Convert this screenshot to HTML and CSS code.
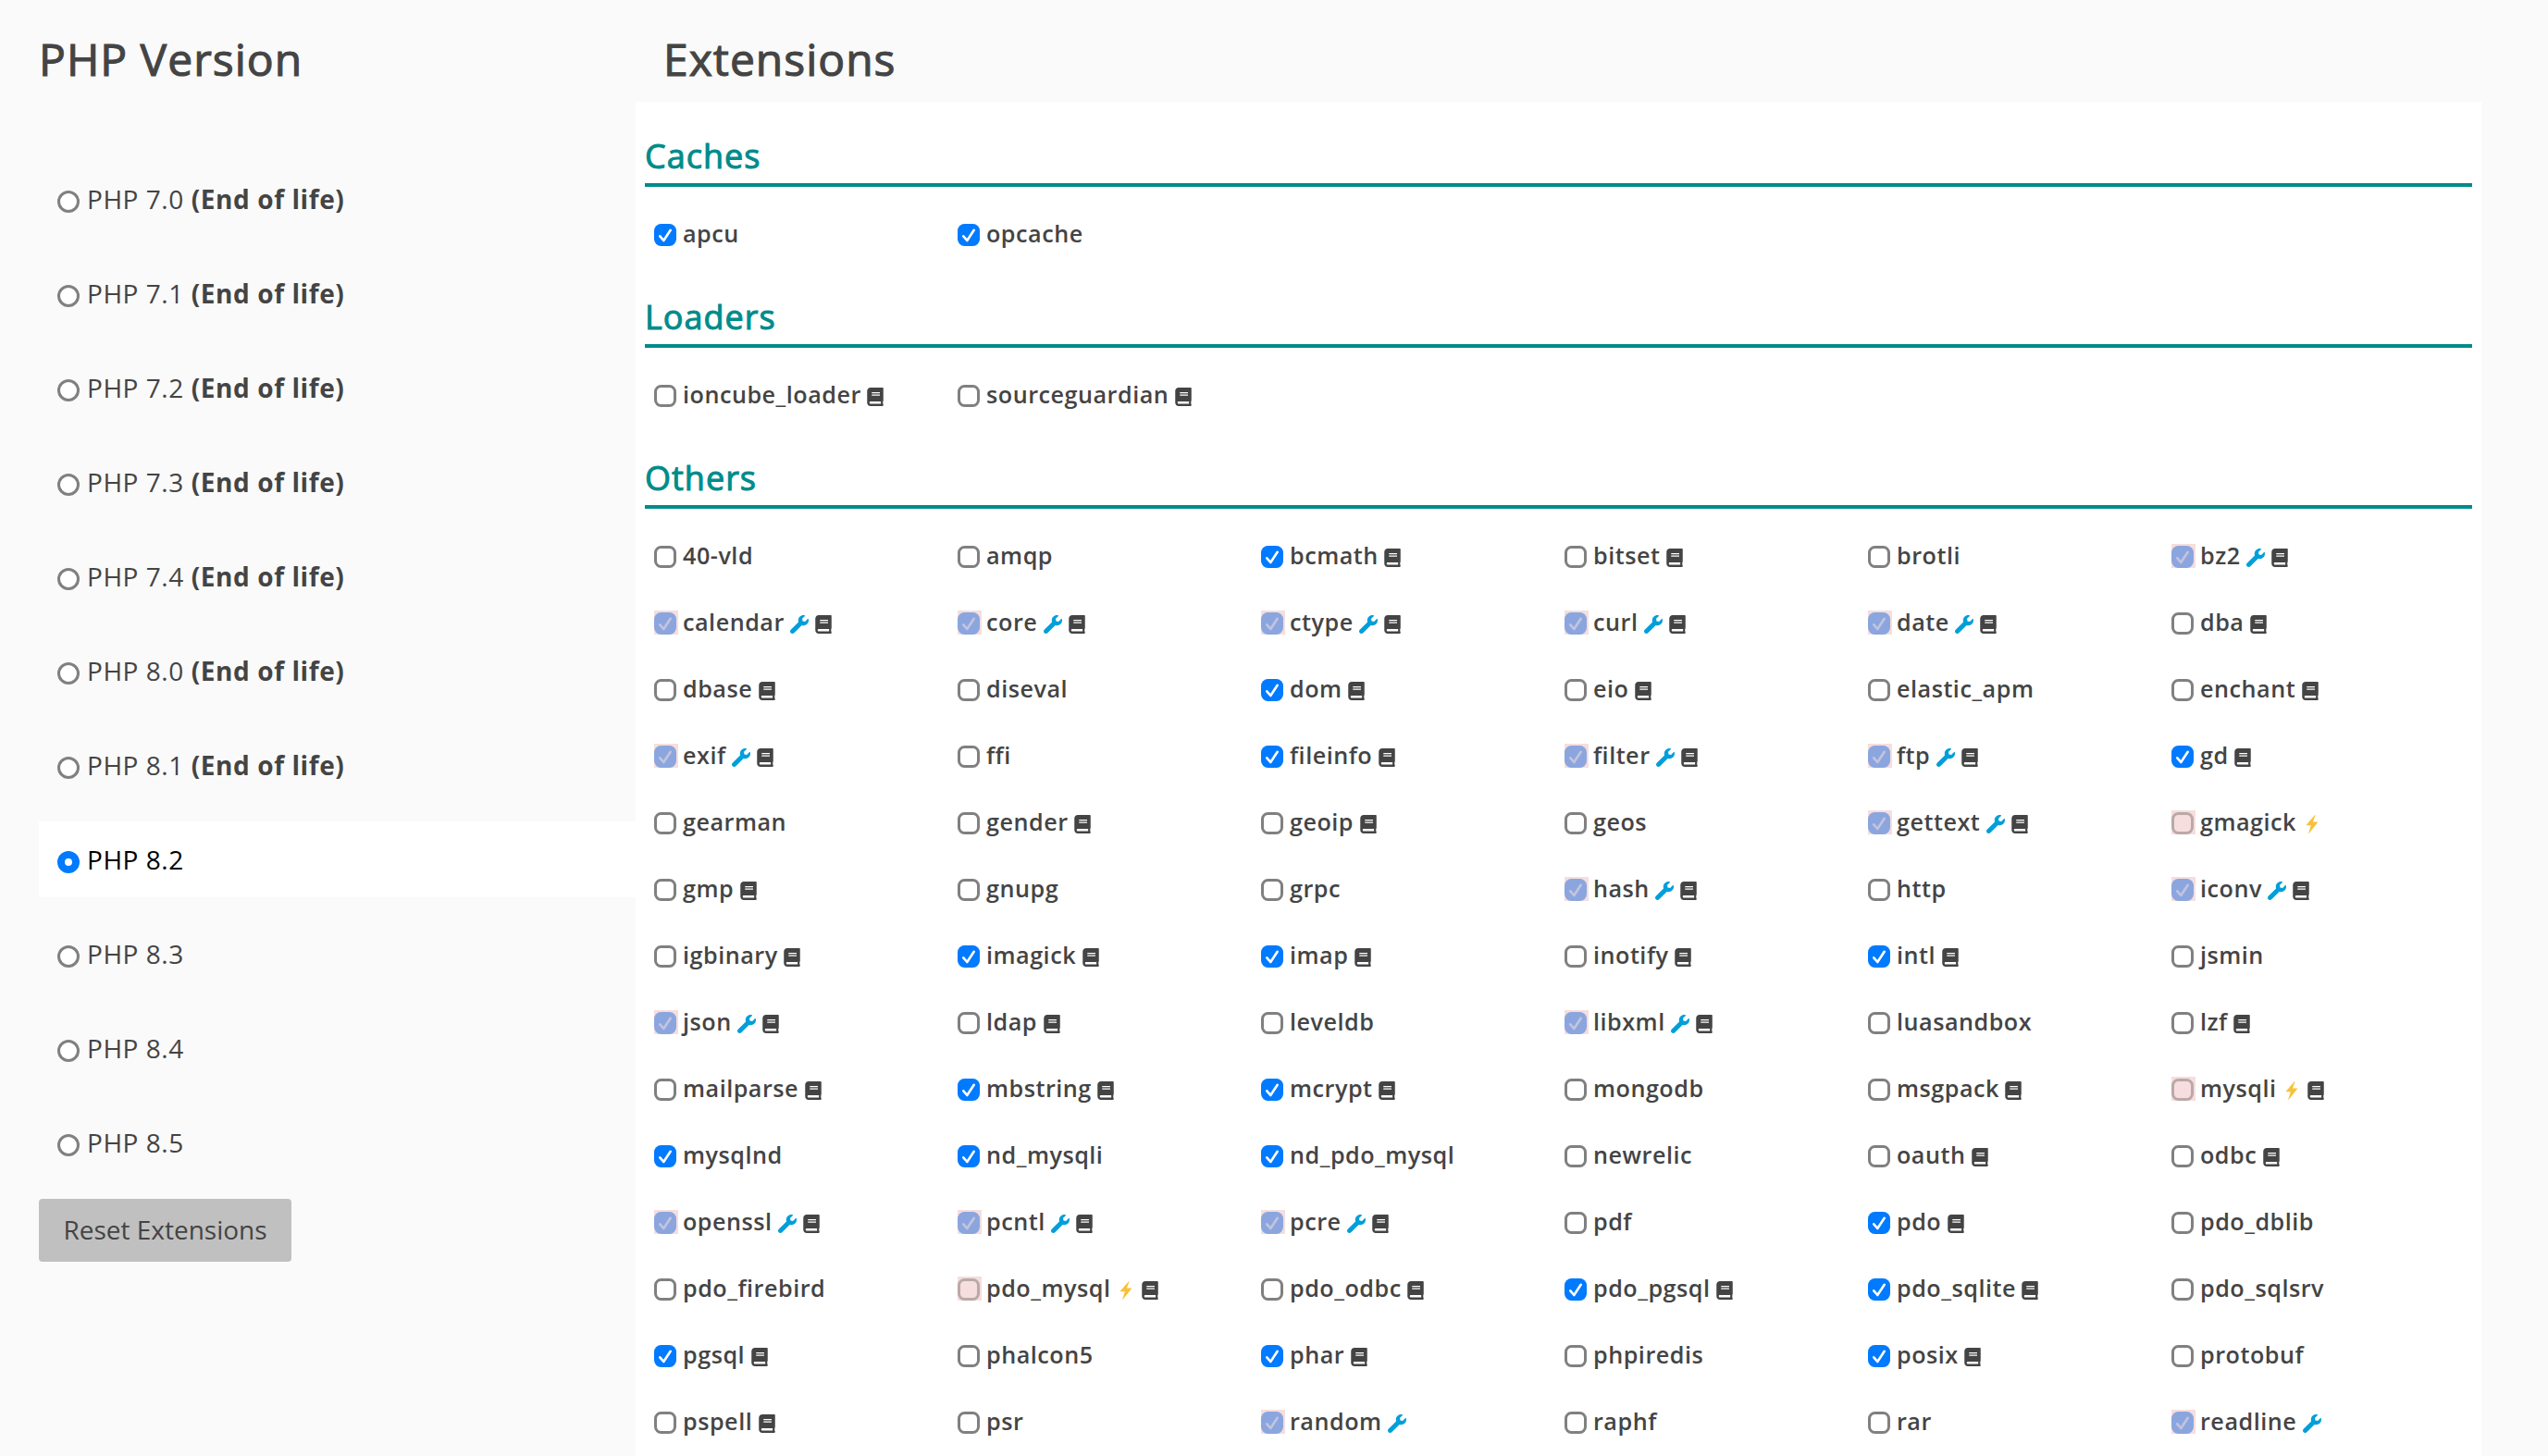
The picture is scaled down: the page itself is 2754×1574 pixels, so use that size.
FILE: index.html
```html
<!DOCTYPE html>
<html lang="en">
<head>
    <meta charset="UTF-8">
    <meta name="viewport" content="width=device-width, initial-scale=1.0">
    <title>PHP Version</title>
    <link rel="stylesheet" href="styles.css">
</head>
<body>

<svg class="sprite">
    <symbol id="book" viewBox="0 0 448 512">
        <path d="M448 360V24c0-13.300-10.700-24-24-24H96C43 0 0 43 0 96v320c0 53 43 96 96 96h328c13.300 0 24-10.700 24-24v-16c0-7.500-3.500-14.300-8.900-18.700-4.200-15.400-4.200-59.300 0-74.700 5.400-4.300 8.900-11.100 8.900-18.600zM128 134c0-3.300 2.700-6 6-6h212c3.300 0 6 2.700 6 6v20c0 3.300-2.700 6-6 6H134c-3.300 0-6-2.700-6-6v-20zm0 64c0-3.300 2.700-6 6-6h212c3.300 0 6 2.700 6 6v20c0 3.300-2.700 6-6 6H134c-3.300 0-6-2.700-6-6v-20zm253.400 250H96c-17.700 0-32-14.300-32-32 0-17.600 14.400-32 32-32h285.400c-1.900 17.100-1.900 46.900 0 64z"/>
    </symbol>
    <symbol id="wrench" viewBox="0 0 512 512">
        <path d="M507.700 109.100c-2.200-9-13.500-12.100-20.100-5.500l-74.400 74.400-67.900-11.300L334 98.900l74.400-74.400c6.600-6.600 3.400-17.900-5.700-20.200-47.400-11.700-99.600.9-136.600 37.900-39.600 39.600-50.500 97.100-34.100 147.200L18.700 402.800c-25 25-25 65.500 0 90.500s65.500 25 90.500 0l213.200-213.200c50.100 16.700 107.500 5.700 147.400-34.200 37.100-37.100 49.700-89.300 37.900-136.800z"/>
    </symbol>
    <symbol id="bolt" viewBox="0 0 320 512">
        <path d="M302 190H184L250 8c3-8-6-11-11-5L6 270c-6 8-5 20 10 20h114L64 500c-2 9 7 14 13 7L312 214c8-10 4-24-10-24z"/>
    </symbol>
</svg>

<div class="selector">
    <div class="versions">
        <h1>PHP Version</h1>
        <ul id="versionList"></ul>
        <button type="button">Reset Extensions</button>
    </div>

    <div class="extensions">
        <h1>Extensions</h1>
        <div class="panel" id="panel"></div>
    </div>
</div>

<script src="script.js"></script>

</body>
</html>
```

FILE: styles.css
```css
body {
    background-color: #fafafa;
    color: #444444;
    font-family: "Open Sans", sans-serif;
    font-size: 28px;
    letter-spacing: 0.55px;
    margin: 0;
    height: 1574px;
    overflow: hidden;
}

.sprite {
    display: none;
}

.selector {
    display: flex;
    padding-left: 42px;
}

.versions {
    width: 645px;
}

.extensions {
    width: 1995px;
}

h1 {
    font-size: 48px;
    font-weight: 400;
    -webkit-text-stroke: 1.1px;
    letter-spacing: 1px;
    line-height: 66px;
    margin: 0;
    padding-top: 31px;
    box-sizing: border-box;
    height: 110px;
}

.extensions h1 {
    padding-left: 30px;
}

.versions ul {
    list-style: none;
    margin: 0;
    padding: 54px 0 0;
}

.versions li {
    display: flex;
    align-items: center;
    height: 82px;
    margin: 10px 0 20px;
    padding-left: 20px;
}

.versions li + li {
    margin-top: 0;
}

.versions li.active {
    background-color: #ffffff;
    color: #000000;
}

.versions label {
    line-height: 38px;
    padding-bottom: 1px;
    white-space: pre;
}

.versions b {
    letter-spacing: 0.6px;
}

input {
    appearance: none;
    box-sizing: border-box;
    flex: none;
    width: 24px;
    height: 24px;
    margin: 0;
    background-color: #ffffff;
    border: 3px solid #808080;
}

input[type="radio"] {
    border-radius: 50%;
    margin: 6px 8px 0 0;
}

input[type="radio"]:checked {
    border: 8.500px solid #007aff;
}

button {
    display: block;
    width: 273px;
    height: 68px;
    padding: 0 0 2px;
    background-color: #c0c0c0;
    color: #444444;
    border: none;
    border-radius: 4px;
    font-family: inherit;
    font-size: 28px;
}

.panel {
    background-color: #ffffff;
    padding: 31px 10px;
}

h2 {
    color: #008b8b;
    font-size: 36px;
    font-weight: 400;
    -webkit-text-stroke: 1px;
    letter-spacing: 1px;
    line-height: 56px;
    margin: 0;
    padding-bottom: 1px;
    border-bottom: 4px solid #008b8b;
}

.items {
    display: grid;
    grid-template-columns: repeat(6, 328px);
    grid-auto-rows: 72px;
    padding: 15px 0 26px 10px;
}

.item {
    display: flex;
    align-items: center;
    font-size: 25.2px;
    font-weight: 600;
    letter-spacing: 0.5px;
    white-space: nowrap;
}

.name {
    padding-bottom: 2px;
}

.box {
    width: 26px;
    height: 26px;
    margin-right: 5px;
    box-sizing: border-box;
    padding-top: 2px;
}

.box input {
    display: block;
    border-radius: 7.5px;
}

.box input:checked {
    border: none;
    background: #007aff url('data:image/svg+xml,<svg xmlns="http://www.w3.org/2000/svg" viewBox="0 0 24 24"><path d="M6.300 13.300L10.300 18L17.700 6.800" fill="none" stroke="white" stroke-width="2.600" stroke-linecap="round" stroke-linejoin="round"/></svg>');
}

.box.locked {
    background-color: #f5dedd;
}

.box.locked input {
    background-color: #f5dedd;
    border-color: #baa9a8;
}

.box.locked input:checked {
    background: #8ba6df url('data:image/svg+xml,<svg xmlns="http://www.w3.org/2000/svg" viewBox="0 0 24 24"><path d="M6.300 13.300L10.300 18L17.700 6.800" fill="none" stroke="%23c4c4dd" stroke-width="2.600" stroke-linecap="round" stroke-linejoin="round"/></svg>');
}

.icon {
    width: 20px;
    height: 20px;
    margin: 3px 0 0 7px;
    fill: #444444;
}

.icon.book {
    width: 18px;
}

.name + .icon {
    margin-left: 6.5px;
}

.icon.wrench {
    fill: #009fda;
}

.icon.bolt {
    fill: #f8c13a;
}
```

FILE: script.js
```js
const versions = ["7.0", "7.1", "7.2", "7.3", "7.4", "8.0", "8.1", "8.2", "8.3", "8.4", "8.5"];
const endOfLife = ["7.0", "7.1", "7.2", "7.3", "7.4", "8.0", "8.1"];
const current = "8.2";

// + enabled, = built in, ! conflict, * has documentation
const groups = {
    "Caches": "apcu+ opcache+",
    "Loaders": "ioncube_loader* sourceguardian*",
    "Others": `40-vld amqp bcmath+* bitset* brotli bz2=*
        calendar=* core=* ctype=* curl=* date=* dba*
        dbase* diseval dom+* eio* elastic_apm enchant*
        exif=* ffi fileinfo+* filter=* ftp=* gd+*
        gearman gender* geoip* geos gettext=* gmagick!
        gmp* gnupg grpc hash=* http iconv=*
        igbinary* imagick+* imap+* inotify* intl+* jsmin
        json=* ldap* leveldb libxml=* luasandbox lzf*
        mailparse* mbstring+* mcrypt+* mongodb msgpack* mysqli!*
        mysqlnd+ nd_mysqli+ nd_pdo_mysql+ newrelic oauth* odbc*
        openssl=* pcntl=* pcre=* pdf pdo+* pdo_dblib
        pdo_firebird pdo_mysql!* pdo_odbc* pdo_pgsql+* pdo_sqlite+* pdo_sqlsrv
        pgsql+* phalcon5 phar+* phpiredis posix+* protobuf
        pspell* psr random= raphf rar readline=`
};

function icon(name) {
    return `<svg class="icon ${name}"><use href="#${name}"/></svg>`;
}

function extension(entry) {
    const name = entry.replace(/[+=!*]/g, "");
    const builtIn = entry.includes("=");
    const conflict = entry.includes("!");
    const checked = builtIn || entry.includes("+") ? "checked" : "";
    const locked = builtIn || conflict;

    return `<label class="item">
        <span class="box ${locked ? "locked" : ""}"><input type="checkbox" ${checked} ${locked ? "disabled" : ""}></span>
        <span class="name">${name}</span>
        ${builtIn ? icon("wrench") : ""}${conflict ? icon("bolt") : ""}${entry.includes("*") ? icon("book") : ""}
    </label>`;
}

document.getElementById("versionList").innerHTML = versions.map(v => `
    <li class="${v === current ? "active" : ""}">
        <input type="radio" name="version" id="php${v}" ${v === current ? "checked" : ""}>
        <label for="php${v}">PHP ${v}${endOfLife.includes(v) ? " <b>(End of life)</b>" : ""}</label>
    </li>`).join("");

document.getElementById("panel").innerHTML = Object.keys(groups).map(title => `
    <h2>${title}</h2>
    <div class="items">${groups[title].split(/\s+/).map(extension).join("")}</div>`).join("");
```
